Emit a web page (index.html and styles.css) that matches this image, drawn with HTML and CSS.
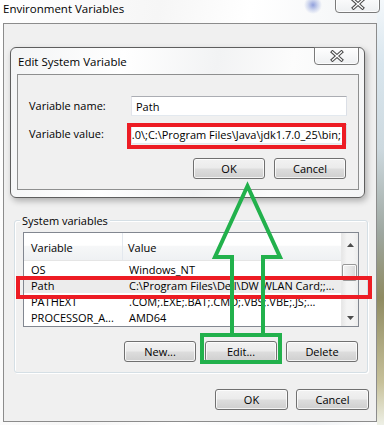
FILE: index.html
```html
<!DOCTYPE html>
<html>
<head>
<meta charset="utf-8">
<link rel="stylesheet" href="styles.css">
</head>
<body>
<div class="screen">
  <div class="win-title">
    <span class="win-title-text">Environment Variables</span>
    <div class="close close-outer">
      <svg width="14" height="12" viewBox="0 0 14 12"><path d="M2.5 2 L11.5 10 M11.5 2 L2.5 10" stroke="#4b4b4b" stroke-width="3.4" stroke-linecap="square"/><path d="M2.5 2 L11.5 10 M11.5 2 L2.5 10" stroke="#fff" stroke-width="1.3" stroke-linecap="square"/></svg>
    </div>
  </div>
  <div class="win-client">
    <div class="dlg">
      <div class="dlg-title">
        <span class="dlg-title-text">Edit System Variable</span>
        <div class="close close-inner">
          <svg width="14" height="12" viewBox="0 0 14 12"><path d="M2.5 2 L11.5 10 M11.5 2 L2.5 10" stroke="#4b4b4b" stroke-width="3.4" stroke-linecap="square"/><path d="M2.5 2 L11.5 10 M11.5 2 L2.5 10" stroke="#fff" stroke-width="1.3" stroke-linecap="square"/></svg>
        </div>
      </div>
      <div class="dlg-client">
        <div class="form">
          <label class="lbl">Variable name:</label>
          <div class="input"><span>Path</span></div>
          <label class="lbl">Variable value:</label>
          <div class="input input-value"><span>.0\;C:\Program Files\Java\jdk1.7.0_25\bin;</span><span class="caret"></span></div>
        </div>
        <div class="btnrow dlg-btns">
          <button class="btn">OK</button>
          <button class="btn">Cancel</button>
        </div>
      </div>
    </div>

    <div class="group">
      <div class="group-label">System variables</div>
      <div class="list">
        <div class="list-main">
          <div class="row head">
            <div class="c1">Variable</div>
            <div class="c2">Value</div>
          </div>
          <div class="row"><div class="c1">OS</div><div class="c2">Windows_NT</div></div>
          <div class="row sel"><div class="c1">Path</div><div class="c2">C:\Program Files\Dell\DW WLAN Card;;...</div></div>
          <div class="row"><div class="c1">PATHEXT</div><div class="c2">.COM;.EXE;.BAT;.CMD;.VBS;.VBE;.JS;...</div></div>
          <div class="row"><div class="c1">PROCESSOR_A...</div><div class="c2">AMD64</div></div>
        </div>
        <div class="sb">
          <div class="sb-up"><svg width="7" height="4" viewBox="0 0 7 4"><path d="M0 4 L3.5 0 L7 4 Z" fill="#4d4d4d"/></svg></div>
          <div class="sb-track"><div class="sb-thumb"></div></div>
          <div class="sb-down"><svg width="7" height="4" viewBox="0 0 7 4"><path d="M0 0 L3.5 4 L7 0 Z" fill="#4d4d4d"/></svg></div>
        </div>
      </div>
      <div class="btnrow grp-btns">
        <button class="btn">New...</button>
        <button class="btn">Edit...</button>
        <button class="btn">Delete</button>
      </div>
    </div>

    <div class="btnrow main-btns">
      <button class="btn btn-wide">OK</button>
      <button class="btn btn-wide">Cancel</button>
    </div>
  </div>

  <svg class="annot" width="384" height="425" viewBox="0 0 384 425">
    <rect x="129" y="125" width="215" height="22" fill="none" stroke="#ed1c24" stroke-width="4"/>
    <rect x="18" y="278" width="352" height="19" fill="none" stroke="#ed1c24" stroke-width="4"/>
    <rect x="202" y="335" width="78" height="27" fill="none" stroke="#22b14c" stroke-width="4"/>
    <polyline points="232,335 232,257 215,257 247.5,186 280,257 263,257 263,335" fill="none" stroke="#22b14c" stroke-width="4" stroke-linejoin="miter"/>
  </svg>
</div>
</body>
</html>
```

FILE: styles.css
```css
* { box-sizing: border-box; }
html, body { margin: 0; padding: 0; }
body {
  width: 384px;
  height: 425px;
  overflow: hidden;
  font-family: "Open Sans", "Noto Sans", sans-serif;
  font-size: 11px;
  color: #000;
}
.screen {
  position: relative;
  width: 384px;
  height: 425px;
  overflow: hidden;
  display: flex;
  flex-direction: column;
  background:
    linear-gradient(to bottom, #f4f8fb 0%, #d9e6ee 15%, #cdd9df 35%, #9ea7a0 55%, #8f8b62 70%, #c7c19a 90%, #eef0e6 100%) right top / 7px 100% no-repeat,
    linear-gradient(100deg, #ffffff 0%, #f6f6f6 35%, #ffffff 55%, #f1f3f5 85%, #ffffff 100%);
}

/* outer window title */
.win-title {
  height: 23px;
  flex: none;
  display: flex;
  justify-content: space-between;
  align-items: flex-start;
  background: radial-gradient(circle at 313px 5px, rgba(110,130,210,0.75) 0, rgba(130,150,215,0.35) 5px, rgba(255,255,255,0) 9px);
}
.win-title-text {
  padding-left: 3px;
  line-height: 18px;
  font-size: 11.5px;
}
.close {
  width: 45px;
  height: 18px;
  border: 1px solid #7a7a7a;
  border-radius: 0 0 4px 4px;
  display: flex;
  align-items: center;
  justify-content: center;
  background: linear-gradient(rgba(255,255,255,0.85), rgba(236,238,240,0.85));
  box-shadow: inset 0 0 0 1px rgba(255,255,255,0.8);
}
.close-outer {
  margin-top: -5px;
  margin-right: 4px;
  padding-top: 3px;
}
.close-outer svg { margin-top: -4px; }

/* outer client */
.win-client {
  margin-left: 3px;
  width: 374px;
  height: 399px;
  flex: none;
  border: 1px solid #8c8c8c;
  background: #f0f0f0;
  display: flex;
  flex-direction: column;
}

/* edit dialog */
.dlg {
  margin: 23px 0 0 6px;
  width: 355px;
  height: 151px;
  flex: none;
  border: 1px solid #5e5e5e;
  border-radius: 6px;
  padding: 0 5px 7px 6px;
  display: flex;
  flex-direction: column;
  background: linear-gradient(100deg, #f3f4f5 0%, #ffffff 30%, #f2f3f4 55%, #fcfcfc 75%, #f4f5f6 100%);
  box-shadow: 2px 3px 6px rgba(0,0,0,0.28);
}
.dlg-title {
  height: 26px;
  flex: none;
  display: flex;
  justify-content: space-between;
}
.dlg-title-text {
  align-self: center;
  padding-left: 1px;
  font-size: 11.5px;
}
.close-inner {
  margin-top: -1px;
}
.dlg-client {
  height: 116px;
  flex: none;
  border: 1px solid #8e8f8f;
  background: #f0f0f0;
  padding: 21px 11px 0 11px;
}
.form {
  display: grid;
  grid-template-columns: 102px 1fr;
  row-gap: 8px;
  align-items: center;
}
.lbl { line-height: 20px; }
.input {
  height: 20px;
  border: 1px solid;
  border-color: #abadb3 #dbdfe6 #e3e9ef #e2e3ea;
  background: #fff;
  padding: 0 4px;
  display: flex;
  align-items: center;
  white-space: nowrap;
  overflow: hidden;
}
.input-value {
  justify-content: flex-end;
  padding: 0 3px 0 1px;
}
.input-value span { flex: none; }
.caret {
  width: 1px;
  height: 14px;
  background: #000;
  margin-left: 1px;
}

.btnrow {
  display: flex;
  justify-content: flex-end;
  flex: none;
}
.btn {
  width: 72px;
  height: 21px;
  padding: 0;
  margin: 0;
  font: inherit;
  color: #000;
  border: 1px solid #707070;
  border-radius: 3px;
  background: linear-gradient(#f2f2f2 0%, #ebebeb 48%, #dddddd 52%, #cfcfcf 100%);
  box-shadow: inset 0 0 0 1px rgba(255,255,255,0.75);
  display: flex;
  align-items: center;
  justify-content: center;
}
.dlg-btns {
  margin-top: 14px;
  padding-right: 1px;
  gap: 9px;
}

/* group box */
.group {
  margin: 22px 0 0 10px;
  width: 354px;
  flex: none;
  border: 1px solid #d5dfe5;
  border-radius: 3px;
  box-shadow: inset 1px 1px 0 #fff, 1px 1px 0 #fff;
  padding: 0 8px 10px 8px;
  display: flex;
  flex-direction: column;
}
.group-label {
  margin: -8px 0 0 -3px;
  line-height: 16px;
  padding: 0 2px;
  background: #f0f0f0;
  align-self: flex-start;
}
.list {
  margin-top: 3px;
  height: 95px;
  border: 1px solid #828790;
  background: #fff;
  display: flex;
}
.list-main {
  flex: 1;
  min-width: 0;
  display: flex;
  flex-direction: column;
}
.row {
  height: 16px;
  display: flex;
  align-items: center;
  white-space: nowrap;
}
.row .c1 {
  width: 99px;
  padding-left: 7px;
  flex: none;
  overflow: hidden;
}
.row .c2 {
  flex: 1;
  padding-left: 6px;
  overflow: hidden;
}
.row.head {
  height: 28px;
  align-items: stretch;
  border-bottom: 1px solid #e5e5e5;
  background: linear-gradient(#ffffff 0%, #ffffff 45%, #f6f7f8 50%, #eff1f3 100%);
}
.row.head .c1, .row.head .c2 {
  display: flex;
  align-items: center;
  padding-top: 2px;
}
.row.head .c1 { border-right: 1px solid #e3e8ee; }
.row.head .c2 { padding-left: 5px; }
.row.sel { background: #ececec; }

/* scrollbar */
.sb {
  width: 17px;
  flex: none;
  display: flex;
  flex-direction: column;
  background: linear-gradient(to right, #e7e7e7, #f4f4f4 30%, #f4f4f4 70%, #ececec);
  border-left: 1px solid #e8e8e8;
}
.sb-up {
  height: 22px;
  display: flex;
  align-items: center;
  justify-content: center;
  padding-top: 1px;
}
.sb-track {
  flex: 1;
  padding: 9px 1px 0 0;
}
.sb-thumb {
  height: 17px;
  border: 1px solid #989898;
  border-radius: 2px;
  background: linear-gradient(to right, #f3f3f3, #e8e8e8 50%, #d8d8d8);
  box-shadow: inset 0 0 0 1px rgba(255,255,255,0.8);
}
.sb-down {
  height: 17px;
  display: flex;
  align-items: center;
  justify-content: center;
}
.grp-btns {
  margin-top: 14px;
  padding-right: 1px;
  gap: 9px;
}
.main-btns {
  margin-top: 16px;
  padding-right: 7px;
  gap: 8px;
}
.btn-wide { width: 73px; }

/* annotations drawn over the screenshot */
.annot {
  position: absolute;
  left: 0;
  top: 0;
  pointer-events: none;
}
```
